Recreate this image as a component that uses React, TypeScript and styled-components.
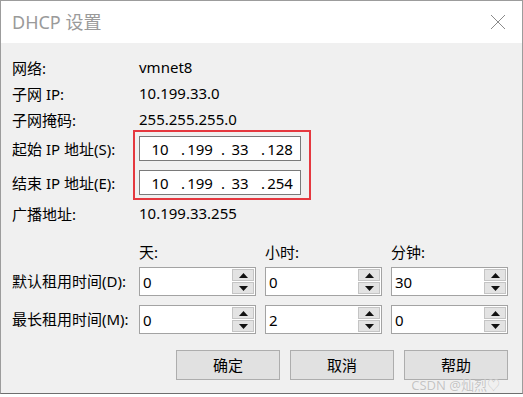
import React from 'react'
import styled, { createGlobalStyle } from 'styled-components'

const GlobalStyle = createGlobalStyle`
  html, body {
    margin: 0;
    padding: 0;
    background: #ffffff;
  }
  body {
    font-family: 'Noto Sans', 'Noto Sans CJK SC', sans-serif;
    color: #000;
  }
`

const Window = styled.div`
  position: relative;
  box-sizing: border-box;
  width: 523px;
  height: 394px;
  border: 1px solid #9c9c9c;
  border-bottom-color: #6e6e6e;
  background: #f0f0f0;
  display: flex;
  flex-direction: column;
  overflow: hidden;
`

const TitleBar = styled.div`
  height: 42px;
  flex: none;
  background: #ffffff;
  display: flex;
  align-items: center;
  justify-content: space-between;
  padding: 0 16px 0 11px;
`

const Title = styled.div`
  font-size: 18px;
  color: #9a9a9a;
  padding-bottom: 2px;
`

const CloseIcon = () => (
  <svg width="16" height="16" viewBox="0 0 16 16">
    <path d="M1 1 L15 15 M15 1 L1 15" stroke="#8a8a8a" strokeWidth="1" fill="none" />
  </svg>
)

const Body = styled.div`
  flex: 1;
  padding: 11px 14px 0 11px;
  display: flex;
  flex-direction: column;
  font-size: 15px;
`

const InfoRow = styled.div`
  display: grid;
  grid-template-columns: 127px auto;
  height: 26px;
  align-items: center;
`

const Label = styled.div`
  white-space: nowrap;
`

const IpSection = styled.div`
  display: grid;
  grid-template-columns: 121px auto;
  margin-top: -2px;
`

const IpLabels = styled.div`
  display: flex;
  flex-direction: column;
  padding-top: 6px;
  gap: 9px;
`

const IpLabel = styled.div`
  height: 25px;
  display: flex;
  align-items: center;
  white-space: nowrap;
`

const RedBox = styled.div`
  justify-self: start;
  border: 2px solid #e5383f;
  padding: 4px 8px 3px 4px;
  display: flex;
  flex-direction: column;
  gap: 9px;
`

const IpInput = styled.div`
  box-sizing: border-box;
  width: 162px;
  height: 25px;
  background: #ffffff;
  border: 1px solid #7a7a7a;
  display: grid;
  grid-template-columns: repeat(4, 1fr);
  align-items: center;
`

const Octet = styled.div<{ $dot: boolean }>`
  position: relative;
  text-align: center;
  &::before {
    content: ${(p) => (p.$dot ? "'.'" : "''")};
    position: absolute;
    left: 1px;
  }
`

const LeaseGrid = styled.div`
  margin-top: 16px;
  display: grid;
  grid-template-columns: 118px repeat(3, 117px);
  column-gap: 9px;
  row-gap: 0;
  align-items: center;
`

const Header = styled.div`
  height: 22px;
  line-height: 20px;
  margin-bottom: 3px;
`

const LeaseLabel = styled.div<{ $gap: number }>`
  white-space: nowrap;
  height: 29px;
  line-height: 29px;
  margin-bottom: ${(p) => p.$gap}px;
`

const SpinBox = styled.div<{ $gap: number }>`
  box-sizing: border-box;
  height: 29px;
  margin-bottom: ${(p) => p.$gap}px;
  background: #ffffff;
  border: 1px solid #a3a3a3;
  display: flex;
  align-items: stretch;
`

const SpinValue = styled.div`
  flex: 1;
  padding-left: 3px;
  display: flex;
  align-items: center;
`

const Spinner = styled.div`
  width: 22px;
  display: flex;
  flex-direction: column;
  padding: 1px;
  gap: 1px;
`

const SpinButton = styled.div`
  flex: 1;
  background: #e3e3e3;
  border: 1px solid #c4c4c4;
  display: flex;
  align-items: center;
  justify-content: center;
`

const Arrow = ({ up }: { up?: boolean }) => (
  <svg width="9" height="5" viewBox="0 0 9 5">
    <path d={up ? 'M0 5 L4.5 0 L9 5 Z' : 'M0 0 L4.5 5 L9 0 Z'} fill="#111" />
  </svg>
)

const ButtonRow = styled.div`
  margin-top: 16px;
  display: flex;
  justify-content: flex-end;
  gap: 10px;
`

const Button = styled.div`
  box-sizing: border-box;
  width: 104px;
  height: 30px;
  background: #e1e1e1;
  border: 1px solid #adadad;
  display: flex;
  align-items: center;
  justify-content: center;
  font-size: 15px;
  line-height: 20px;
`

const Watermark = styled.div`
  position: absolute;
  right: 22px;
  bottom: 2px;
  font-size: 13px;
  line-height: 12px;
  color: #c4c4c4;
  text-shadow: 0 0 1px #ffffff;
  white-space: nowrap;
`

const info = [
  ['网络:', 'vmnet8'],
  ['子网 IP:', '10.199.33.0'],
  ['子网掩码:', '255.255.255.0'],
]

const ipRanges = [
  { label: '起始 IP 地址(S):', octets: ['10', '199', '33', '128'] },
  { label: '结束 IP 地址(E):', octets: ['10', '199', '33', '254'] },
]

const leases = [
  { label: '默认租用时间(D):', values: ['0', '0', '30'], gap: 9 },
  { label: '最长租用时间(M):', values: ['0', '2', '0'], gap: 0 },
]

const Spin = ({ value, gap }: { value: string; gap: number }) => (
  <SpinBox $gap={gap}>
    <SpinValue>{value}</SpinValue>
    <Spinner>
      <SpinButton>
        <Arrow up />
      </SpinButton>
      <SpinButton>
        <Arrow />
      </SpinButton>
    </Spinner>
  </SpinBox>
)

export default function App() {
  return (
    <>
      <GlobalStyle />
      <Window>
        <TitleBar>
          <Title>DHCP 设置</Title>
          <CloseIcon />
        </TitleBar>
        <Body>
          {info.map(([label, value]) => (
            <InfoRow key={label}>
              <Label>{label}</Label>
              <div>{value}</div>
            </InfoRow>
          ))}
          <IpSection>
            <IpLabels>
              {ipRanges.map((r) => (
                <IpLabel key={r.label}>{r.label}</IpLabel>
              ))}
            </IpLabels>
            <RedBox>
              {ipRanges.map((r) => (
                <IpInput key={r.label}>
                  {r.octets.map((o, i) => (
                    <Octet key={i} $dot={i > 0}>
                      {o}
                    </Octet>
                  ))}
                </IpInput>
              ))}
            </RedBox>
          </IpSection>
          <InfoRow>
            <Label>广播地址:</Label>
            <div>10.199.33.255</div>
          </InfoRow>
          <LeaseGrid>
            <div />
            <Header>天:</Header>
            <Header>小时:</Header>
            <Header>分钟:</Header>
            {leases.map((l) => (
              <React.Fragment key={l.label}>
                <LeaseLabel $gap={l.gap}>{l.label}</LeaseLabel>
                {l.values.map((v, i) => (
                  <Spin key={i} value={v} gap={l.gap} />
                ))}
              </React.Fragment>
            ))}
          </LeaseGrid>
          <ButtonRow>
            <Button>确定</Button>
            <Button>取消</Button>
            <Button>帮助</Button>
          </ButtonRow>
        </Body>
        <Watermark>CSDN @灿烈♡</Watermark>
      </Window>
    </>
  )
}
